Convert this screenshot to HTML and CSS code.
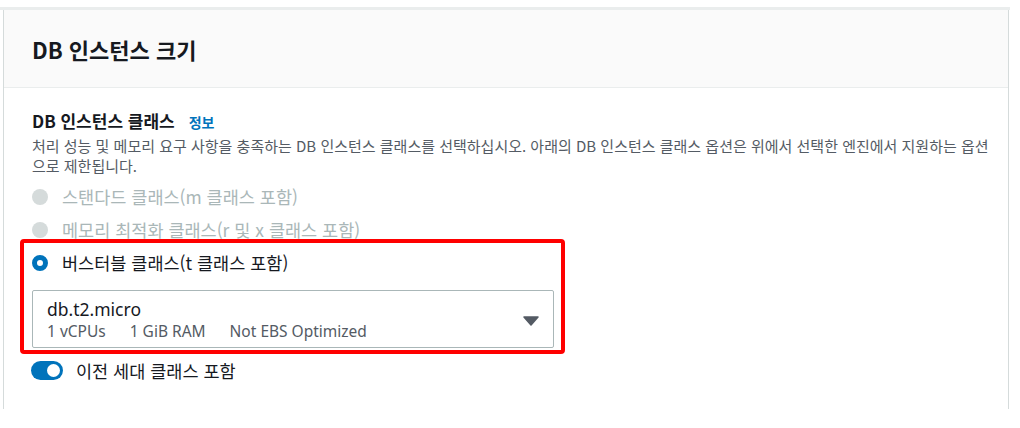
FILE: index.html
```html
<!DOCTYPE html>
<html lang="ko">
<head>
<meta charset="utf-8">
<title>DB 인스턴스 크기</title>
<link rel="stylesheet" href="styles.css">
</head>
<body>
<div class="panel">
  <div class="card">
    <div class="card-header">
      <h2 class="title">DB 인스턴스 크기</h2>
    </div>
    <div class="card-body">
      <div class="field-label">
        <span class="label-text">DB 인스턴스 클래스</span>
        <a class="info-link">정보</a>
      </div>
      <p class="description">처리 성능 및 메모리 요구 사항을 충족하는 DB 인스턴스 클래스를 선택하십시오. 아래의 DB 인스턴스 클래스 옵션은 위에서 선택한 엔진에서 지원하는 옵션으로 제한됩니다.</p>
      <div class="radio-group">
        <div class="radio-row disabled">
          <span class="radio"></span>
          <span class="radio-label">스탠다드 클래스(m 클래스 포함)</span>
        </div>
        <div class="radio-row disabled">
          <span class="radio"></span>
          <span class="radio-label">메모리 최적화 클래스(r 및 x 클래스 포함)</span>
        </div>
        <div class="highlight">
          <div class="radio-row">
            <span class="radio checked"></span>
            <span class="radio-label">버스터블 클래스(t 클래스 포함)</span>
          </div>
          <div class="select">
            <div class="select-text">
              <div class="select-value">db.t2.micro</div>
              <div class="select-meta">
                <span>1 vCPUs</span>
                <span>1 GiB RAM</span>
                <span>Not EBS Optimized</span>
              </div>
            </div>
            <svg class="caret" width="16" height="10" viewBox="0 0 16 10"><path d="M1 1 H15 L8 9 Z" fill="#545b64" stroke="#545b64" stroke-width="1.5" stroke-linejoin="round"/></svg>
          </div>
        </div>
      </div>
      <div class="toggle-row">
        <span class="toggle"><span class="knob"></span></span>
        <span class="toggle-label">이전 세대 클래스 포함</span>
      </div>
    </div>
  </div>
</div>
</body>
</html>
```

FILE: styles.css
```css
* { box-sizing: border-box; }
html, body {
  margin: 0;
  padding: 0;
  background: #ffffff;
}
body {
  font-family: "Noto Sans", "Noto Sans CJK KR", sans-serif;
  color: #16191f;
}
.panel {
  margin-top: 7px;
  width: 1010px;
  border-top: 3px solid #eaeded;
}
.card {
  margin: 0 1px 0 3px;
  border-left: 1px solid #d5dbdb;
  border-right: 1px solid #d5dbdb;
}
.card-header {
  background: #fafafa;
  border-bottom: 1px solid #eaeded;
  padding: 25px 28px 24px;
}
.title {
  margin: 0;
  font-size: 22px;
  line-height: 28px;
  font-weight: 700;
  font-family: "Noto Sans CJK KR", sans-serif;
}
.card-body {
  padding: 22px 12px 28px 28px;
}
.field-label {
  display: flex;
  align-items: baseline;
  gap: 14px;
  line-height: 22px;
}
.label-text {
  font-size: 17px;
  font-weight: 700;
  font-family: "Noto Sans CJK KR", sans-serif;
}
.info-link {
  font-size: 14px;
  font-weight: 700;
  color: #0073bb;
  font-family: "Noto Sans CJK KR", sans-serif;
}
.description {
  margin: 3px 0 0;
  font-size: 15px;
  line-height: 20px;
  color: #545b64;
  font-family: "Noto Sans CJK KR", sans-serif;
}
.radio-group {
  margin-top: 4px;
}
.radio-row {
  display: flex;
  align-items: center;
  height: 33px;
  gap: 14px;
}
.radio {
  width: 16px;
  height: 16px;
  border-radius: 50%;
  background: #d5dbdb;
  flex: none;
}
.radio.checked {
  background: #ffffff;
  border: 5px solid #0073bb;
}
.radio-label {
  font-size: 17.5px;
  font-family: "Noto Sans CJK KR", sans-serif;
}
.disabled .radio-label {
  color: #aab7b8;
}
.highlight {
  position: relative;
  width: 522px;
}
.highlight::after {
  content: "";
  position: absolute;
  top: -7px;
  left: -12px;
  right: -11px;
  bottom: -6px;
  border: 4px solid #ff0000;
  border-radius: 4px;
  pointer-events: none;
}
.select {
  margin-top: 11px;
  width: 522px;
  height: 58px;
  border: 1px solid #aab7b8;
  border-radius: 2px;
  padding: 7px 14px 5px 14px;
  display: flex;
  align-items: center;
  justify-content: space-between;
}
.select-value {
  font-size: 17.5px;
  line-height: 23px;
}
.select-meta {
  font-size: 15.5px;
  line-height: 21px;
  color: #545b64;
  display: flex;
  gap: 24px;
}
.caret {
  margin-top: 2px;
}
.toggle-row {
  margin-top: 11px;
  display: flex;
  align-items: center;
  gap: 13px;
  height: 22px;
}
.toggle {
  width: 32px;
  height: 19px;
  border-radius: 10px;
  background: #0073bb;
  display: flex;
  align-items: center;
  justify-content: flex-end;
  padding-right: 3px;
  margin-left: -1px;
}
.knob {
  width: 13px;
  height: 13px;
  border-radius: 50%;
  background: #ffffff;
}
.toggle-label {
  font-size: 17.5px;
  font-family: "Noto Sans CJK KR", sans-serif;
}
```
